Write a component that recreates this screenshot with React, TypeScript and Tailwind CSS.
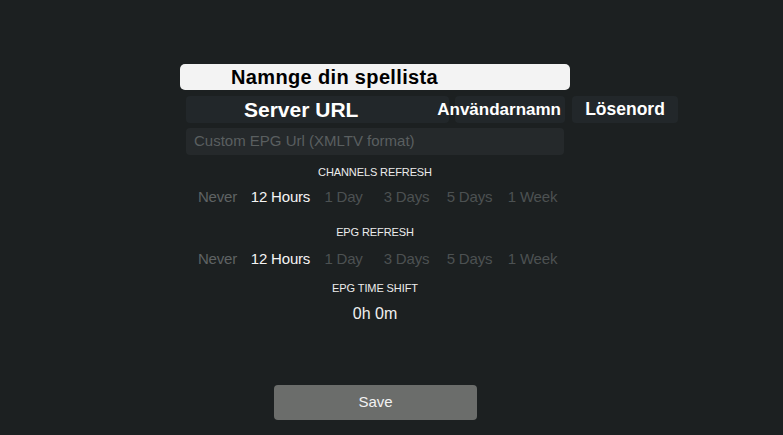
const refreshOptions = ["Never", "12 Hours", "1 Day", "3 Days", "5 Days", "1 Week"];

function OptionRow({ selected }: { selected: string }) {
  return (
    <div className="ml-[6px] grid h-[22px] w-[378px] grid-cols-6 items-center text-center text-[15px] tracking-[-0.2px]">
      {refreshOptions.map((opt) => (
        <span
          key={opt}
          className={
            opt === selected
              ? "text-[#f4f4f4]"
              : opt === "Never"
                ? "text-[#5f6364]"
                : "text-[#4c5152]"
          }
        >
          {opt}
        </span>
      ))}
    </div>
  );
}

function SectionLabel({ children, className }: { children: string; className?: string }) {
  return (
    <div
      className={`flex h-[16px] w-[390px] items-center justify-center text-[11px] tracking-[-0.1px] text-[#ececec] ${className ?? ""}`}
    >
      {children}
    </div>
  );
}

export default function App() {
  return (
    <div
      className="h-[435px] w-[783px] overflow-hidden bg-[#1c2021] pl-[180px] pt-[64px]"
      style={{ fontFamily: '"Liberation Sans", Arial, sans-serif' }}
    >
      <div className="flex flex-col">
        {/* Playlist name (focused) */}
        <div className="flex h-[26px] w-[390px] items-center rounded-[5px] bg-[#f3f3f3] pl-[51px] text-[20px] font-bold tracking-[0.35px] text-black">
          Namnge din spellista
        </div>

        {/* Credentials */}
        <div className="ml-[6px] mt-[6px] flex h-[27px] w-[492px] items-stretch">
          <div className="flex w-[263px] items-center rounded-[4px] bg-[#22272a] pl-[58px] text-[21px] font-bold text-white">
            Server URL
          </div>
          <div className="ml-[6px] flex w-[110px] items-center justify-end whitespace-nowrap rounded-[4px] bg-[#22272a] pr-[4px] text-[17px] font-bold text-white">
            Användarnamn
          </div>
          <div className="ml-[7px] flex w-[106px] items-center justify-center rounded-[4px] bg-[#22272a] text-[17.5px] font-bold text-white">
            Lösenord
          </div>
        </div>

        {/* EPG url */}
        <div className="ml-[6px] mt-[5px] flex h-[27px] w-[378px] items-center rounded-[4px] bg-[#25292b] pl-[8px] text-[15px] text-[#5a5f60]">
          Custom EPG Url (XMLTV format)
        </div>

        <SectionLabel className="mt-[9px]">CHANNELS REFRESH</SectionLabel>
        <div className="mt-[6px]">
          <OptionRow selected="12 Hours" />
        </div>

        <SectionLabel className="mt-[16px]">EPG REFRESH</SectionLabel>
        <div className="mt-[8px]">
          <OptionRow selected="12 Hours" />
        </div>

        <SectionLabel className="mt-[10px]">EPG TIME SHIFT</SectionLabel>
        <div className="mt-[7px] flex h-[22px] w-[390px] items-center justify-center text-[16px] text-[#f0f0f0]">
          0h 0m
        </div>

        <button className="ml-[94px] mt-[60px] flex h-[35px] w-[203px] items-center justify-center rounded-[4px] bg-[#6b6d6b] text-[15px] font-medium text-[#f2f2f2]">
          Save
        </button>
      </div>
    </div>
  );
}
